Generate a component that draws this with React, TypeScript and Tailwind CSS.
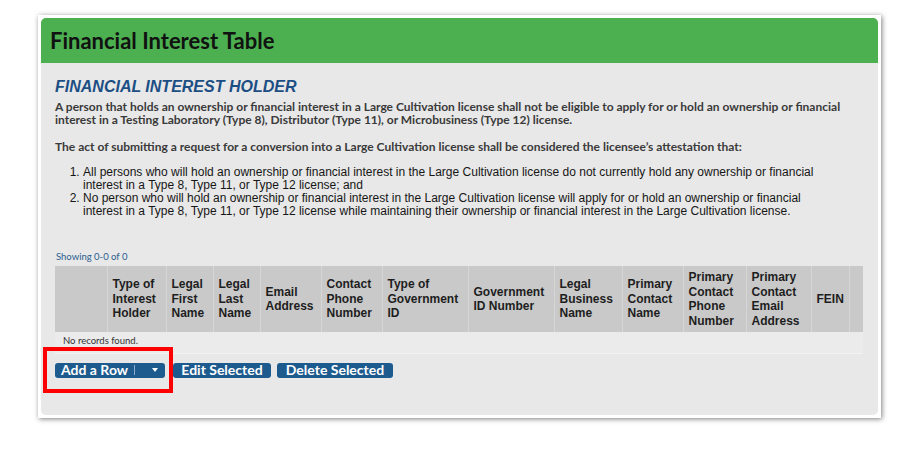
import React from 'react'

const columns: { label: string; width: number }[] = [
  { label: '', width: 52 },
  { label: 'Type of Interest Holder', width: 59 },
  { label: 'Legal First Name', width: 47 },
  { label: 'Legal Last Name', width: 47 },
  { label: 'Email Address', width: 61 },
  { label: 'Contact Phone Number', width: 61 },
  { label: 'Type of Government ID', width: 86 },
  { label: 'Government ID Number', width: 86 },
  { label: 'Legal Business Name', width: 68 },
  { label: 'Primary Contact Name', width: 61 },
  { label: 'Primary Contact Phone Number', width: 63 },
  { label: 'Primary Contact Email Address', width: 65 },
  { label: 'FEIN', width: 38 },
  { label: '', width: 14 },
]

const lato = "font-['Lato',_'Liberation_Sans',_sans-serif]"
const arial = "font-['Liberation_Sans',_Arial,_sans-serif]"

const App = (): JSX.Element => {
  return (
    <div className="relative h-[458px] w-[904px] overflow-hidden bg-white">
      <div className="ml-[38px] mt-[15px] w-[843px] bg-white p-[3px] shadow-[1px_1px_5px_rgba(0,0,0,0.5)]">
        <div className="overflow-hidden rounded-[5px] bg-[#e8e8e8]">
          {/* Green header */}
          <div className="flex h-[45px] items-center bg-[#4caf50] pl-[9px]">
            <h1 className={`${lato} text-[22px] font-bold leading-none text-[#111]`}>Financial Interest Table</h1>
          </div>

          {/* Body */}
          <div className="px-[14px] pb-[37px]">
            <h2 className={`${arial} mt-[15px] text-[16px] font-bold italic leading-[18px] text-[#1c4e84]`}>
              FINANCIAL INTEREST HOLDER
            </h2>
            <p className={`${lato} mt-[4px] w-[792px] text-[12px] font-bold leading-[13.3px] text-[#3a3a3a]`}>
              A person that holds an ownership or financial interest in a Large Cultivation license shall not be eligible to
              apply for or hold an ownership or financial interest in a Testing Laboratory (Type 8), Distributor (Type 11),
              or Microbusiness (Type 12) license.
            </p>
            <p className={`${lato} mt-[13.3px] text-[12px] font-bold leading-[13.3px] text-[#3a3a3a]`}>
              The act of submitting a request for a conversion into a Large Cultivation license shall be considered the
              licensee&rsquo;s attestation that:
            </p>
            <ol className={`${arial} mt-[13px] w-[786px] list-decimal pl-[28px] text-[12px] leading-[13px] text-[#161616]`}>
              <li>
                All persons who will hold an ownership or financial interest in the Large Cultivation license do not
                currently hold any ownership or financial interest in a Type 8, Type 11, or Type 12 license; and
              </li>
              <li>
                No person who will hold an ownership or financial interest in the Large Cultivation license will apply for or
                hold an ownership or financial interest in a Type 8, Type 11, or Type 12 license while maintaining their
                ownership or financial interest in the Large Cultivation license.
              </li>
            </ol>

            <div className={`${lato} mt-[33px] pl-[1px] text-[9.5px] leading-[12px] text-[#2a5d8f]`}>Showing 0-0 of 0</div>

            <table className="mt-[3px] w-[808px] table-fixed border-collapse">
              <colgroup>
                {columns.map((c, i) => (
                  <col key={i} style={{ width: c.width }} />
                ))}
              </colgroup>
              <thead>
                <tr className="h-[66px] bg-[#c9c9c9]">
                  {columns.map((c, i) => (
                    <th
                      key={i}
                      className={`${arial} border-l border-[#d6d6d6] px-[5px] text-left align-middle text-[12px] font-bold leading-[14.6px] text-[#1e1e1e] first:border-l-0`}
                    >
                      {c.label}
                    </th>
                  ))}
                </tr>
              </thead>
              <tbody>
                <tr className="h-[21px] border-b border-[#f2f2f2] bg-[#ebebeb]">
                  <td colSpan={columns.length} className={`${lato} pl-[8px] pt-[3px] align-top text-[9.5px] leading-[12px] text-[#333]`}>
                    No records found.
                  </td>
                </tr>
              </tbody>
            </table>

            {/* Action buttons */}
            <div className={`${lato} mt-[9px] flex items-center text-[14px] font-bold leading-none text-white`}>
              <button className="flex h-[15px] w-[110px] items-center rounded-[3px] bg-[#1d5a8e] pl-[6px]">
                <span>Add a Row</span>
                <span className="ml-[6px] h-[10px] w-px bg-[#8eaccb]" />
                <span className="ml-[17px] h-0 w-0 border-x-[3.5px] border-t-[4px] border-x-transparent border-t-white" />
              </button>
              <button className="ml-[8px] flex h-[15px] w-[98px] items-center justify-center rounded-[3px] bg-[#1d5a8e]">
                Edit Selected
              </button>
              <button className="ml-[6px] flex h-[15px] w-[116px] items-center justify-center rounded-[3px] bg-[#1d5a8e]">
                Delete Selected
              </button>
            </div>
          </div>
        </div>
      </div>

      {/* Red highlight box */}
      <div className="absolute left-[43px] top-[347px] h-[46px] w-[130px] border-4 border-[#fe0000]" />
    </div>
  )
}

export default App
